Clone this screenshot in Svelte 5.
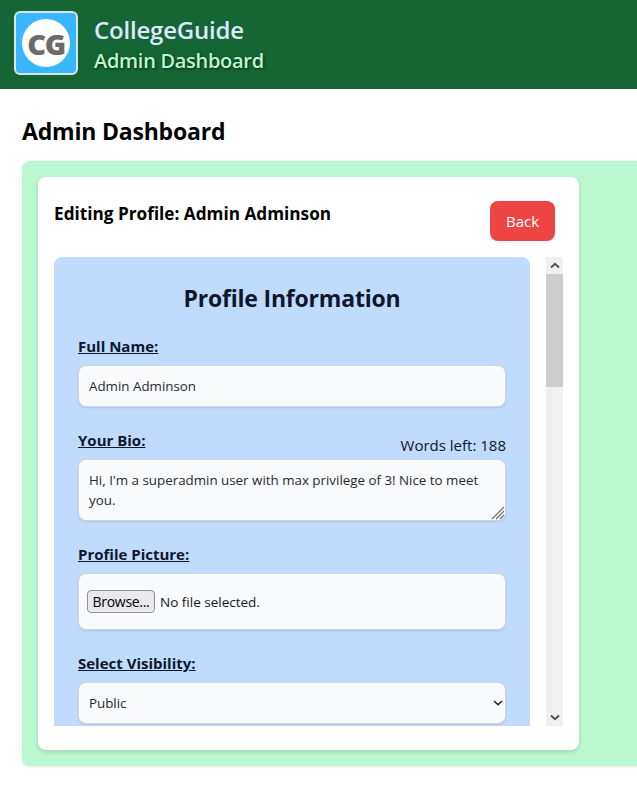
<script>
  let name = $state('Admin Adminson');
  let bio = $state("Hi, I'm a superadmin user with max privilege of 3! Nice to meet you.");
  let visibility = $state('Public');
</script>

<div class="page">
  <header class="topbar">
    <div class="logo">
      <div class="logo-disc"><span>CG</span></div>
    </div>
    <div class="brand">
      <div class="brand-name">CollegeGuide</div>
      <div class="brand-sub">Admin Dashboard</div>
    </div>
  </header>

  <main class="main">
    <h1>Admin Dashboard</h1>
    <section class="panel">
      <div class="card">
        <div class="card-head">
          <h2>Editing Profile: Admin Adminson</h2>
          <button class="back">Back</button>
        </div>
        <div class="scroller">
          <div class="viewport">
            <form class="form">
              <h3>Profile Information</h3>

              <div class="field">
                <label class="lbl" for="fn">Full Name:</label>
                <input id="fn" class="ctl" bind:value={name} />
              </div>

              <div class="field">
                <div class="bio-head">
                  <label class="lbl" for="bio">Your Bio:</label>
                  <span class="words">Words left: 188</span>
                </div>
                <div class="bio-wrap">
                  <textarea id="bio" class="ctl area" bind:value={bio}></textarea>
                  <svg class="grip" width="14" height="14" viewBox="0 0 14 14" aria-hidden="true">
                    <path d="M1 13 13 1M5 13l8-8M9 13l4-4" stroke="#777" stroke-width="1.3" fill="none" />
                  </svg>
                </div>
              </div>

              <div class="field">
                <span class="lbl">Profile Picture:</span>
                <div class="ctl file">
                  <button type="button" class="browse">Browse...</button>
                  <span>No file selected.</span>
                </div>
              </div>

              <div class="field">
                <label class="lbl" for="vis">Select Visibility:</label>
                <div class="select-wrap">
                  <select id="vis" class="ctl sel" bind:value={visibility}>
                    <option>Public</option>
                    <option>Private</option>
                  </select>
                  <svg class="chev" width="10" height="6" viewBox="0 0 10 6" aria-hidden="true">
                    <path d="M1 1l4 3.6L9 1" stroke="#1f2937" stroke-width="1.6" fill="none" />
                  </svg>
                </div>
              </div>
            </form>
          </div>
          <div class="sbar" aria-hidden="true">
            <div class="arrow">
              <svg width="10" height="7" viewBox="0 0 10 7"><path d="M1 5.5l4-3.7 4 3.7" stroke="#505050" stroke-width="2" fill="none" /></svg>
            </div>
            <div class="track"><div class="thumb"></div></div>
            <div class="arrow">
              <svg width="10" height="7" viewBox="0 0 10 7"><path d="M1 1.5l4 3.7 4-3.7" stroke="#505050" stroke-width="2" fill="none" /></svg>
            </div>
          </div>
        </div>
      </div>
    </section>
  </main>
</div>

<style>
  :global(body) {
    margin: 0;
    background: #fff;
    overflow: hidden;
  }
  .page {
    width: 637px;
    height: 791px;
    overflow: hidden;
    font-family: "Open Sans", "Noto Sans", sans-serif;
    color: #000;
  }
  .topbar {
    height: 89px;
    box-sizing: border-box;
    background: #166534;
    display: flex;
    align-items: flex-start;
    padding: 11px 14px 0;
    gap: 16px;
  }
  .logo {
    width: 64px;
    height: 64px;
    box-sizing: border-box;
    background: #38b6ff;
    border: 2px solid #d9e6e2;
    border-radius: 6px;
    display: flex;
    align-items: center;
    justify-content: center;
  }
  .logo-disc {
    width: 48px;
    height: 48px;
    border-radius: 50%;
    background: #fff;
    display: flex;
    align-items: center;
    justify-content: center;
  }
  .logo-disc span {
    font-family: "Open Sans", sans-serif;
    font-weight: 800;
    font-size: 29px;
    letter-spacing: -1.5px;
    color: #6b6b6b;
  }
  .brand {
    display: flex;
    flex-direction: column;
    padding-top: 3px;
  }
  .brand-name {
    font-size: 24px;
    line-height: 32px;
    font-weight: 600;
    color: #dbeafe;
    letter-spacing: -0.2px;
  }
  .brand-sub {
    font-size: 20px;
    line-height: 28px;
    margin-top: 1px;
    font-weight: 600;
    color: #bbf7d0;
    letter-spacing: -0.3px;
    text-shadow: 1px 1px 3px rgba(0, 0, 0, 0.6);
  }
  .main {
    padding: 26px 0 0 22px;
  }
  h1 {
    margin: 0 0 14px;
    font-size: 23px;
    line-height: 32px;
    font-weight: 700;
    letter-spacing: -0.2px;
  }
  .panel {
    width: 700px;
    height: 605px;
    box-sizing: border-box;
    padding: 16px;
    background: #bbf7d0;
    border-radius: 8px;
    box-shadow: 0 1px 3px rgba(0, 0, 0, 0.12);
  }
  .card {
    width: 541px;
    height: 573px;
    box-sizing: border-box;
    padding: 16px 16px 24px;
    background: #fff;
    border-radius: 8px;
    box-shadow: 0 2px 4px rgba(0, 0, 0, 0.15);
    display: flex;
    flex-direction: column;
  }
  .card-head {
    display: flex;
    justify-content: space-between;
    align-items: flex-start;
    height: 64px;
    padding-right: 8px;
  }
  h2 {
    margin: 8px 0 0;
    font-size: 17.2px;
    line-height: 26px;
    font-weight: 700;
  }
  .back {
    margin-top: 8px;
    width: 65px;
    height: 40px;
    border: 0;
    border-radius: 8px;
    background: #ef4444;
    color: #fff;
    font: 15px "Open Sans", sans-serif;
    padding: 0;
  }
  .scroller {
    height: 469px;
    display: flex;
    gap: 16px;
  }
  .viewport {
    width: 476px;
    overflow: hidden;
  }
  .form {
    background: #bfdbfe;
    border-radius: 8px;
    padding: 23px 24px 24px;
    height: 600px;
    box-sizing: border-box;
    color: #0f172a;
  }
  h3 {
    margin: 0 0 18px;
    height: 36px;
    font-size: 23px;
    line-height: 36px;
    font-weight: 700;
    text-align: center;
    letter-spacing: -0.2px;
  }
  .field {
    margin-bottom: 21px;
  }
  .lbl {
    display: block;
    font-size: 15px;
    line-height: 24px;
    font-weight: 700;
    text-decoration: underline;
    margin-bottom: 7px;
  }
  .ctl {
    display: block;
    width: 100%;
    box-sizing: border-box;
    height: 42px;
    padding: 0 10px;
    margin: 0;
    border: 1px solid #d1d5db;
    border-radius: 8px;
    background: #f9fafb;
    color: #1f2937;
    font: 13.35px/20px "Open Sans", sans-serif;
    box-shadow: 0 1px 2px rgba(0, 0, 0, 0.1);
    outline: none;
  }
  .bio-head {
    display: flex;
    justify-content: space-between;
    align-items: flex-start;
    height: 31px;
  }
  .bio-head .lbl {
    margin: 0;
  }
  .words {
    font-size: 15px;
    line-height: 24px;
    margin-top: 5px;
  }
  .bio-wrap {
    position: relative;
  }
  .area {
    height: 62px;
    padding: 10px;
    resize: none;
    overflow: hidden;
    display: block;
  }
  .grip {
    position: absolute;
    right: 1px;
    bottom: 1px;
  }
  .file {
    height: 57px;
    display: flex;
    align-items: center;
    gap: 5px;
    padding: 0 8px;
    color: #111827;
    font-size: 13.5px;
  }
  .browse {
    width: 68px;
    height: 23px;
    padding: 0;
    border: 1px solid #8f8f9d;
    border-radius: 4px;
    background: #e9e9ed;
    color: #000;
    font: 14px "Open Sans", sans-serif;
    letter-spacing: -0.3px;
  }
  .select-wrap {
    position: relative;
  }
  .sel {
    appearance: none;
    -webkit-appearance: none;
  }
  .chev {
    position: absolute;
    right: 3px;
    top: 18px;
  }
  .sbar {
    width: 17px;
    height: 469px;
    background: #f0f0f0;
    display: flex;
    flex-direction: column;
  }
  .arrow {
    height: 17px;
    display: flex;
    align-items: center;
    justify-content: center;
    flex: none;
  }
  .track {
    flex: 1;
  }
  .thumb {
    height: 113px;
    background: #cdcdcd;
  }
</style>
